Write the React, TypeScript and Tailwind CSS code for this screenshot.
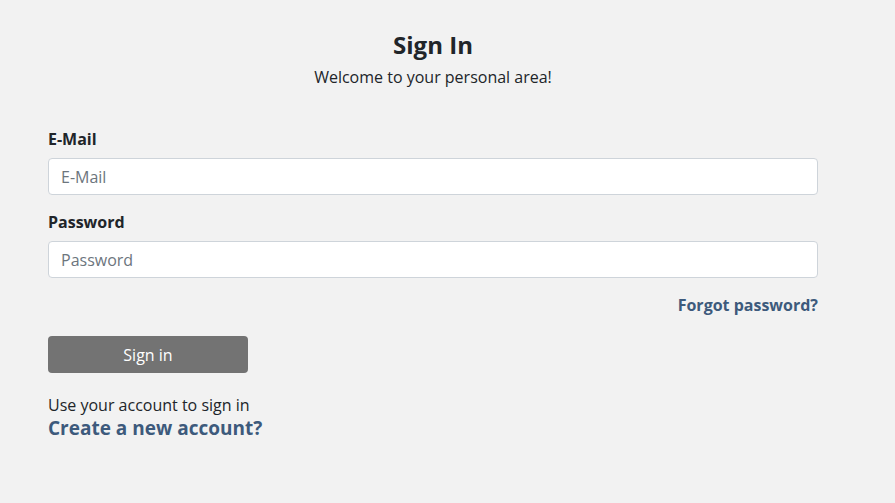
export default function App() {
  return (
    <div className="min-h-[503px] bg-[#f2f2f2] font-['Open_Sans',sans-serif] text-[#212529]">
      <div className="ml-[48px] w-[770px] pt-[29px]">
        <div className="text-center">
          <h1 className="text-[24px] font-bold leading-[32px]">Sign In</h1>
          <p className="mt-[4px] text-[16px] leading-[24px]">Welcome to your personal area!</p>
        </div>

        <form className="mt-[38px]">
          <label className="block text-[16px] font-bold leading-[24px]">E-Mail</label>
          <input
            type="email"
            placeholder="E-Mail"
            className="mt-[7px] block h-[37px] w-full rounded-[4px] border border-[#ced4da] bg-white px-[12px] text-[16px] placeholder:text-[#6c757d]"
          />
          <label className="mt-[15px] block text-[16px] font-bold leading-[24px]">Password</label>
          <input
            type="password"
            placeholder="Password"
            className="mt-[7px] block h-[37px] w-full rounded-[4px] border border-[#ced4da] bg-white px-[12px] text-[16px] placeholder:text-[#6c757d]"
          />
          <div className="mt-[15px] flex justify-end">
            <a href="#" className="text-[16px] font-bold leading-[24px] text-[#3d5a7c]">Forgot password?</a>
          </div>
          <button
            type="button"
            className="mt-[19px] h-[37px] w-[200px] rounded-[4px] bg-[#737373] text-[16px] text-white"
          >
            Sign in
          </button>
        </form>

        <p className="mt-[20px] text-[16px] leading-[24px]">Use your account to sign in</p>
        <a href="#" className="block text-[19px] font-bold leading-[22px] text-[#3d5a7c]">Create a new account?</a>
      </div>
    </div>
  );
}
